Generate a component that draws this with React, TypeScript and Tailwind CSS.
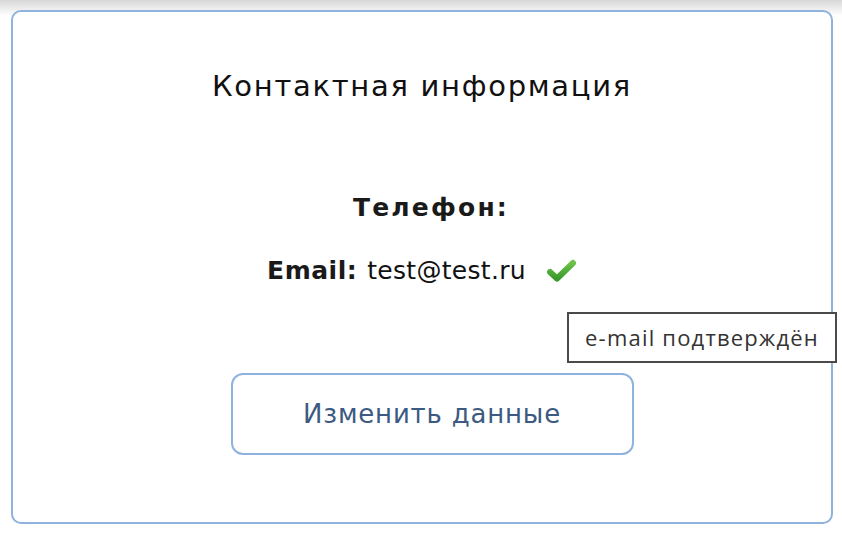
export default function App() {
  return (
    <div className="w-[842px] h-[536px] bg-gradient-to-b from-[#d8d8d8] via-white via-[3%] to-white pt-[10px] px-[11px] font-['DejaVu_Sans',sans-serif] relative">
      <div className="h-[514px] w-[822px] border-2 border-[#8fb3dc] rounded-[10px] bg-white flex flex-col items-center">
        <h1 className="mt-[57px] text-[29px] leading-[34px] text-[#111] tracking-[1.7px]">
          Контактная информация
        </h1>
        <p className="mt-[90px] ml-[18px] text-[25px] leading-[30px] font-bold text-[#1a1a1a] tracking-[2.2px]">
          Телефон:
        </p>
        <div className="mt-[33px] flex items-center text-[25px] leading-[30px] text-[#111]">
          <span className="font-bold text-[#1a1a1a] tracking-[0.5px]">Email:</span>
          <span className="ml-[10px] tracking-[0.3px]">test@test.ru</span>
          <svg width="31" height="24" viewBox="0 0 31 24" className="ml-[20px]">
            <defs>
              <linearGradient id="chk" x1="0" y1="0" x2="0" y2="1">
                <stop offset="0" stopColor="#6cc24a" />
                <stop offset="1" stopColor="#3a9a2c" />
              </linearGradient>
            </defs>
            <path
              d="M4 13 L11 19.5 L27 4"
              fill="none"
              stroke="url(#chk)"
              strokeWidth="6"
              strokeLinecap="round"
              strokeLinejoin="round"
            />
          </svg>
        </div>
        <button className="mt-[87px] ml-[20px] w-[403px] h-[82px] border-2 border-[#8fb3dc] rounded-[12px] text-[26px] tracking-[0.8px] text-[#3c5a82]">
          Изменить данные
        </button>
      </div>
      <div className="absolute left-[567px] top-[312px] w-[270px] h-[51px] border-2 border-[#4a4a4a] bg-white flex items-center justify-center text-[22px] tracking-[1.2px] text-[#333] font-['Open_Sans',sans-serif]">
        e-mail подтверждён
      </div>
    </div>
  );
}
